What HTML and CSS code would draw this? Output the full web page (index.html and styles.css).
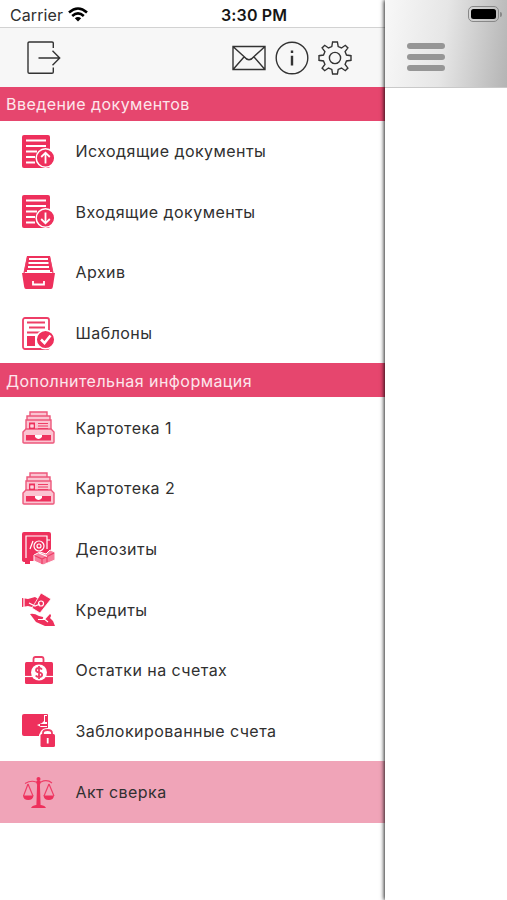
FILE: index.html
```
<!DOCTYPE html>
<html lang="ru">
<head>
<meta charset="utf-8">
<title>Меню</title>
<link rel="stylesheet" href="styles.css">
</head>
<body>
<div class="screen">
  <aside class="drawer">
    <div class="status">
      <span class="carrier">Carrier</span>
      <svg class="wifi" width="20" height="15" viewBox="0 0 20 15" fill="none" stroke="#000" stroke-width="2.6"><path d="M1 5.4Q10 -2.4 19 5.4M4.2 8.9Q10 3.8 15.8 8.9"/><path d="M6.8 11.3Q10 8.6 13.2 11.3L10 14.6Z" fill="#000" stroke="none"/></svg>
      <span class="time">3:30 PM</span>
    </div>
    <header class="toolbar">
      <svg class="exit" width="34" height="34" viewBox="0 0 34 34"><path d="M26.3 7V2.3Q26.3 1 25 1H2.3Q1 1 1 2.3V31Q1 32.3 2.3 32.3H25Q26.3 32.3 26.3 31V26.5M11.5 17H32.5M25.5 9.8L32.7 17L25.5 24.2"/></svg>
      <svg class="mail" width="34" height="34" viewBox="0 0 34 34"><path d="M1 5.5H33V28.5H1ZM1.5 6L12.2 15.7Q17 21.8 21.8 15.7L32.500 6M1.500 28L12.200 15.700M32.500 28L21.800 15.700"/></svg>
      <svg class="info" width="34" height="34" viewBox="0 0 34 34"><circle cx="17" cy="17" r="15.800"/><path class="info-mark" d="M17 9.500V12M17 14.800V24.500"/></svg>
      <svg class="gear" width="34" height="34" viewBox="0 0 34 34"><circle cx="17" cy="17" r="5.600"/><path d="M14.600 1H19.400L20.200 5.600L23.500 7L27.300 4.300L29.900 6.900L27.100 10.700L28.500 14L33 14.700V19.300L28.500 20L27.100 23.300L29.900 27.100L27.300 29.700L23.500 27L20.200 28.400L19.400 33H14.600L13.800 28.400L10.500 27L6.700 29.700L4.100 27.100L6.900 23.300L5.500 20L1 19.300V14.700L5.500 14L6.900 10.700L4.100 6.900L6.700 4.300L10.500 7L13.800 5.600Z"/></svg>
    </header>
    <nav>
      <h2 class="section">Введение документов</h2>
      <ul class="menu">
        <li class="item"><svg class="icon" viewBox="0 0 33 33"><rect class="f" width="28" height="33" rx="2"/><path class="w s2" d="M4 5.500H24M4 11H24M4 16.500H15M4 22H13M4 27.500H13"/><circle class="f ring" cx="23.500" cy="23" r="9.300"/><path class="w s2" d="M23.500 28.500V18M19.200 22L23.500 17.700L27.800 22"/></svg>Исходящие документы</li>
        <li class="item"><svg class="icon" viewBox="0 0 33 33"><rect class="f" width="28" height="33" rx="2"/><path class="w s2" d="M4 5.500H24M4 11H24M4 16.500H15M4 22H13M4 27.500H13"/><circle class="f ring" cx="23.500" cy="23" r="9.300"/><path class="w s2" d="M23.500 17.500V28M19.200 24L23.500 28.300L27.800 24"/></svg>Входящие документы</li>
        <li class="item"><svg class="icon" viewBox="0 0 33 33"><path class="f" d="M5 0H28L31 16H2Z"/><path class="w s2" d="M7 3H26M6.500 7H26.500M6 11H27M5 15H28"/><path class="p s1" d="M5.500 1L2 17M27.500 1L31 17"/><path class="f" d="M0 17H33L30.800 31Q30.500 33 29 33H4Q2.500 33 2.200 31Z"/><path class="w s2" d="M11 25V28.500H22V25"/></svg>Архив</li>
        <li class="item"><svg class="icon" viewBox="0 0 33 33"><rect class="p s2" x="1" y="1" width="26" height="31" rx="2"/><path class="p s2" d="M5 5.500H23M7 10.500H23M5 15.500H18"/><path class="f" d="M5 19H13V29H5Z"/><circle class="f ring" cx="23.500" cy="22.500" r="9.300"/><path class="w s3" d="M19 22.500L22.500 26L28.500 18.500"/></svg>Шаблоны</li>
      </ul>
      <h2 class="section">Дополнительная информация</h2>
      <ul class="menu">
        <li class="item"><svg class="icon" viewBox="0 0 33 33"><g class="file"><path d="M8 5V1H25V5M5 9V5H28V9M4 20V9H29V20"/><path d="M1 21L4 18H29L32 21V31Q32 32 31 32H2Q1 32 1 31Z"/></g><path class="f" d="M7 11.500H13V18H7ZM4 24H29V29.500H4Z"/><path class="p s1" d="M16 12.500H26M16 15H26M16 17.500H26"/><path class="w s1" d="M9 14H11V16H9Z"/><path fill="#fff" d="M13 24H20V26Q16.500 30 13 26Z"/></svg>Картотека 1</li>
        <li class="item"><svg class="icon" viewBox="0 0 33 33"><g class="file"><path d="M8 5V1H25V5M5 9V5H28V9M4 20V9H29V20"/><path d="M1 21L4 18H29L32 21V31Q32 32 31 32H2Q1 32 1 31Z"/></g><path class="f" d="M7 11.500H13V18H7ZM4 24H29V29.500H4Z"/><path class="p s1" d="M16 12.500H26M16 15H26M16 17.500H26"/><path class="w s1" d="M9 14H11V16H9Z"/><path fill="#fff" d="M13 24H20V26Q16.500 30 13 26Z"/></svg>Картотека 2</li>
        <li class="item"><svg class="icon" viewBox="0 0 33 33"><path class="f" d="M2 0H27Q29 0 29 2V29H8V32H3V30Q0 30 0 28V2Q0 0 2 0Z"/><path class="w s1" d="M4 26V4H25V17M8 17L11 9M25 8H28"/><circle class="w s1" cx="17" cy="14" r="5"/><circle class="w s1" cx="17" cy="14" r="2"/><path fill="#f77e9c" stroke="#fff" d="M12 23L18 20L24 22L28 18L33 20V28L21 33L12 29Z"/><path class="p s1" d="M12.500 23.500L20 27L32 21M20 27V32M25 24V30"/><path class="w s1" d="M17 21L25 24.500"/></svg>Депозиты</li>
        <li class="item"><svg class="icon" viewBox="0 0 33 33"><path class="f" d="M0 5L6 6L13 4L18 7L14 11L17 13L14 15L6 13L0 14Z"/><path class="f edge" d="M19 0L29 6L18 20L10 15Z"/><circle class="w s1" cx="19" cy="10.500" r="2.500"/><path class="w s1" d="M7 10L13 13L18 11M2 5V14"/><path class="f" d="M8 21Q12 20 17 23L21 24Q22 26 18 26.500H23L28 21Q30 22 28 25L31 28L33 33H23L14 29Z"/><path class="w s1" d="M16 26.500H23L26 29"/></svg>Кредиты</li>
        <li class="item"><svg class="icon" viewBox="0 0 33 33"><path class="p s2" d="M11.500 9V5Q11.500 3 13.500 3H19.500Q21.500 3 21.500 5V9"/><rect class="f" x="3" y="8" width="28" height="22" rx="1.500"/><path class="w s1" d="M3 22.500H31"/><circle cx="17" cy="18.500" r="8" fill="#fff"/><path class="p s2" d="M20 15.500Q18.800 14 17 14Q14 14 14 16.200Q14 18 17 18.300Q20.200 18.800 20.200 20.800Q20.200 23 17 23Q14.800 23 13.700 21.500M17 12V25"/></svg>Остатки на счетах</li>
        <li class="item"><svg class="icon" viewBox="0 0 33 33"><path class="f" d="M2 0H25Q26 0 26 1V22H2Q0 22 0 20V2Q0 0 2 0Z"/><path fill="#fff" d="M22 1V7L20 9L15 11L19 13H25V1Z"/><path class="f" d="M23 2H25V10H18V12H26V8H23Z"/><path d="M17 33V21L19 17Q21 14 26 14Q30 14 31.500 18L33 21V33Z" fill="#fff"/><path class="p s2" d="M21 22V19Q21 16 25.500 16Q30 16 30 19V22"/><rect class="f" x="18.500" y="20" width="14.500" height="13" rx="1.500"/><path class="w s2" d="M25.700 24V29.500"/></svg>Заблокированные счета</li>
        <li class="item active"><svg class="icon" viewBox="0 0 33 33"><path class="p s1" d="M3 7.500Q9 4 14 6H19Q25 3 30 7M6 8L1.500 20M6 8L11 20M27 8L22 20M27 8L32 20"/><path class="f" d="M1 19.500H11.500Q11 24 6.200 24Q1.500 24 1 19.500ZM21.500 19.500H32Q31.500 24 26.800 24Q22 24 21.500 19.500ZM15.200 5H17.800L18.600 29H14.400ZM9 32Q10 29.500 14 29H19Q23 29.500 24 32Z"/><circle class="f" cx="16.500" cy="3" r="2"/><circle class="f" cx="16.500" cy="6.500" r="2.200"/></svg>Акт сверка</li>
      </ul>
    </nav>
  </aside>
  <main class="page">
    <header class="page-head">
      <div class="battery-row"><span class="battery"><span class="charge"></span></span><span class="cap"></span></div>
      <div class="burger"><span></span><span></span><span></span></div>
    </header>
  </main>
</div>
</body>
</html>
```
FILE: styles.css
```
* { box-sizing: border-box; }
body { margin: 0; font-family: Inter, "Liberation Sans", sans-serif; color: #303030; background: #fff; }
.screen { display: flex; width: 507px; height: 900px; overflow: hidden; }
.drawer { width: 385px; height: 900px; flex: none; background: #fff; }
.status { display: flex; align-items: center; height: 27px; padding: 3px 0 0 10px; font-size: 16px; line-height: 24px; }
.carrier { width: 52px; letter-spacing: 0.1px; }
.wifi { margin-left: 6px; margin-top: -2px; }
.time { margin-left: 133px; font-weight: 600; color: #161616; letter-spacing: 0.15px; white-space: nowrap; }
.toolbar { display: flex; align-items: center; height: 60px; padding: 1px 33px 0 27px; border-top: 1px solid #d2d2d2; background: #f7f7f7; }
.toolbar svg { fill: none; stroke: #333; stroke-width: 1.4; flex: none; }
.toolbar .exit { margin-right: auto; }
.toolbar .info { margin: 0 9px; }
.toolbar .info-mark { stroke-width: 2.4; }
.section { display: flex; align-items: center; height: 33.8px; margin: 0; padding: 1px 0 0 6px; background: #e6466e; color: #fde6ec; font-size: 16px; font-weight: 400; letter-spacing: 0.45px; }
.menu { list-style: none; margin: 0; padding: 0; }
.item { display: flex; align-items: center; height: 60.67px; padding-left: 22px; font-size: 16px; letter-spacing: 0.45px; white-space: nowrap; }
.active { height: 62px; background: #f0a4b8; }
.icon { width: 33px; height: 33px; margin-right: 20.5px; flex: none; overflow: visible; }
.f { fill: #ee305c; }
.ring { stroke: #fff; stroke-width: 1.5; }
.edge { stroke: #fff; stroke-width: 0.8; }
.w, .p { fill: none; stroke: #fff; }
.p { stroke: #ee3e67; }
.s1 { stroke-width: 1.2; }
.s2 { stroke-width: 1.8; }
.s3 { stroke-width: 2.6; }
.file { fill: #fbc4d1; stroke: #ed577b; stroke-width: 1.4; }
.page { position: relative; flex: 1; background: #fff; box-shadow: -1px 0 4px rgba(0, 0, 0, 0.85); }
.page-head { height: 88px; padding: 5px 5px 0 22px; border-bottom: 1px solid #c9c9c9; background: linear-gradient(97deg, #f8f8f8 0%, #e6e6e6 48%, #b4b4b4 100%); }
.battery-row { display: flex; align-items: center; justify-content: flex-end; height: 18px; gap: 1px; }
.battery { width: 31px; height: 16px; padding: 2px; border: 1px solid #888; border-radius: 5px; }
.charge { display: block; height: 10px; background: #000; border-radius: 2.5px; }
.cap { width: 2px; height: 5px; background: #888; border-radius: 0 2px 2px 0; }
.burger { display: grid; gap: 5px; width: 38px; margin-top: 20px; }
.burger span { height: 6px; border-radius: 3px; background: #969696; }
```
